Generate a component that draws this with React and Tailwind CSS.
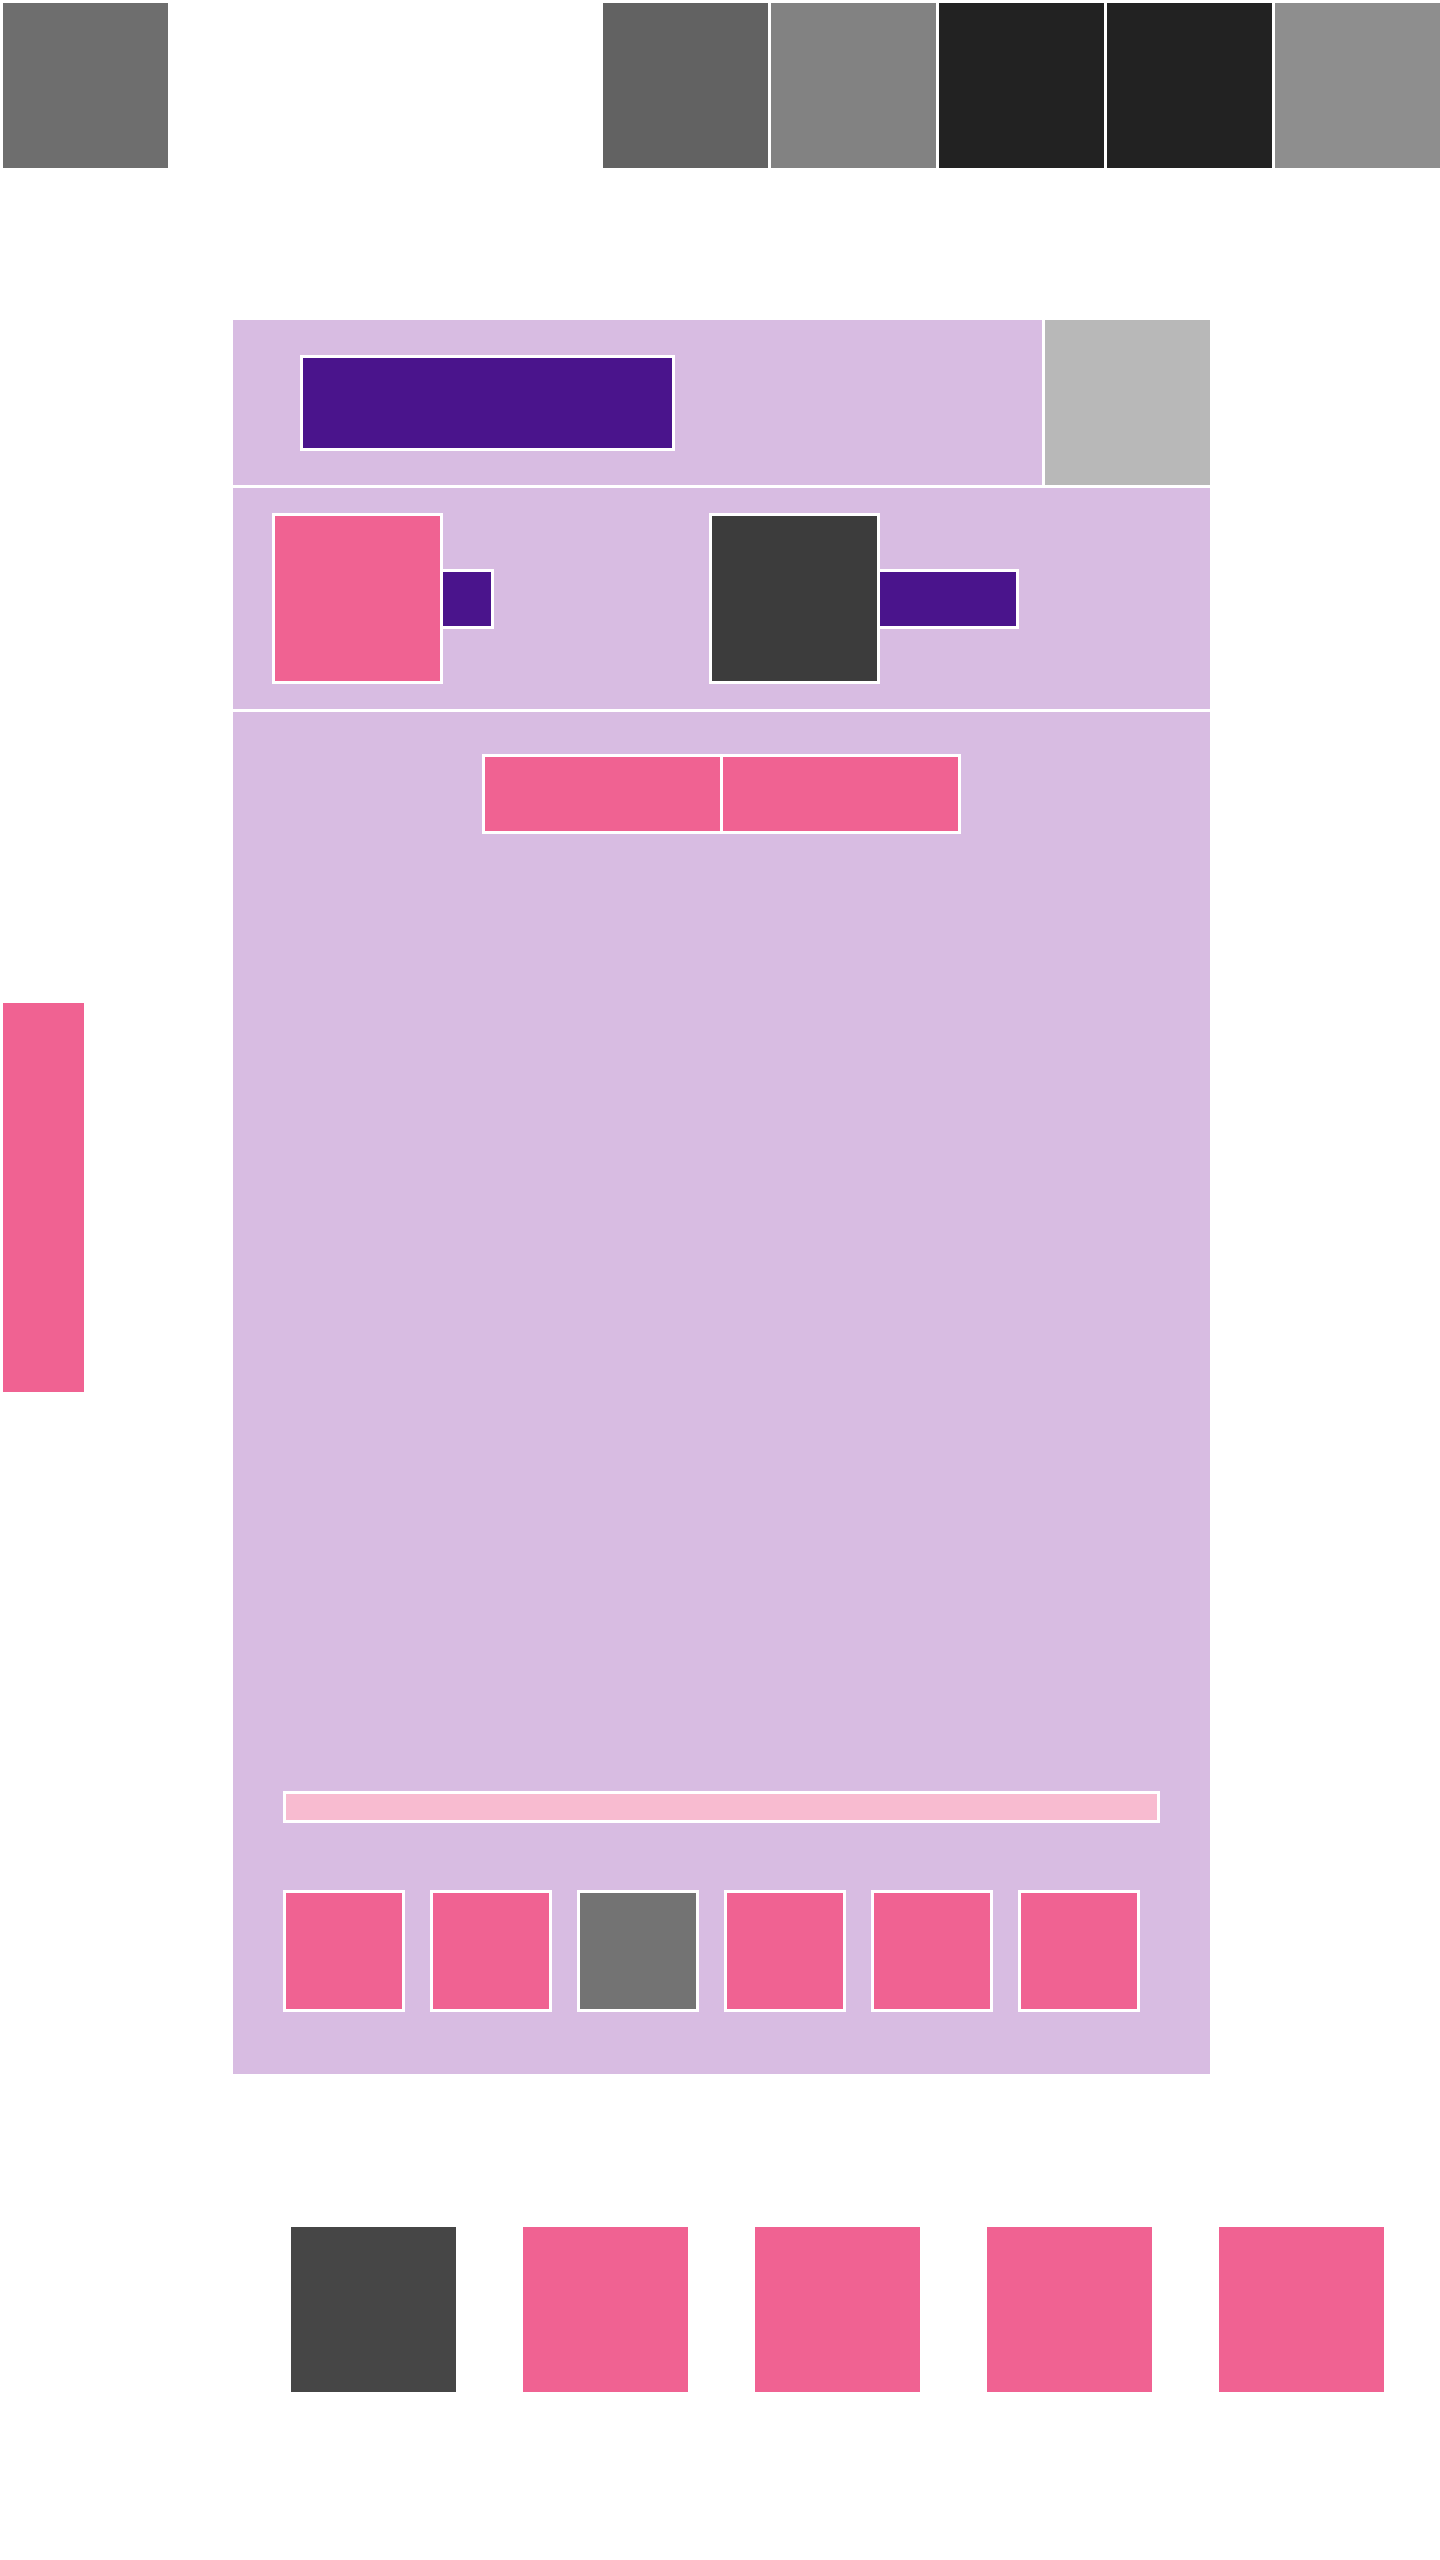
export default function App() {
  const pink = "bg-[#f06292]";
  return (
    <div className="w-[1440px] min-h-[2560px] bg-white">
      {/* top row */}
      <div className="flex justify-between pt-[3px]">
        <div className="ml-[3px] w-[165px] h-[165px] bg-[#6e6e6e]" />
        <div className="flex gap-[3px]">
          <div className="w-[165px] h-[165px] bg-[#626262]" />
          <div className="w-[165px] h-[165px] bg-[#828282]" />
          <div className="w-[165px] h-[165px] bg-[#222222]" />
          <div className="w-[165px] h-[165px] bg-[#222222]" />
          <div className="w-[165px] h-[165px] bg-[#8e8e8e]" />
        </div>
      </div>

      {/* middle */}
      <div className="flex mt-[152px]">
        <div className="w-[233px] shrink-0">
          <div className="ml-[3px] mt-[683px] w-[81px] h-[389px] bg-[#f06292]" />
        </div>
        <div className="w-[977px] flex flex-col gap-[3px]">
          {/* header */}
          <div className="flex gap-[3px] h-[165px]">
            <div className="flex-1 bg-[#d8bce2] flex items-center pl-[67px]">
              <div className="w-[375px] h-[96px] border-[3px] border-white bg-[#4a148c]" />
            </div>
            <div className="w-[165px] h-[165px] bg-[#b8b8b8]" />
          </div>
          {/* section 2 */}
          <div className="bg-[#d8bce2] h-[221px] flex items-center pl-[39px]">
            <div className="flex items-center">
              <div className={`w-[171px] h-[171px] border-[3px] border-white ${pink}`} />
              <div className="w-[51px] h-[60px] border-y-[3px] border-r-[3px] border-white bg-[#4a148c]" />
            </div>
            <div className="flex items-center ml-[215px]">
              <div className="w-[171px] h-[171px] border-[3px] border-white bg-[#3c3c3c]" />
              <div className="w-[139px] h-[60px] border-y-[3px] border-r-[3px] border-white bg-[#4a148c]" />
            </div>
          </div>
          {/* section 3 */}
          <div className="bg-[#d8bce2] h-[1362px] flex flex-col pt-[42px] px-[50px]">
            <div className="self-center flex gap-[3px] bg-white border-[3px] border-white">
              <div className={`w-[235px] h-[74px] ${pink}`} />
              <div className={`w-[235px] h-[74px] ${pink}`} />
            </div>
            <div className="mt-[957px] h-[32px] border-[3px] border-white bg-[#f8bbd0]" />
            <div className="mt-[67px] flex gap-[25px]">
              <div className={`w-[122px] h-[122px] border-[3px] border-white ${pink}`} />
              <div className={`w-[122px] h-[122px] border-[3px] border-white ${pink}`} />
              <div className="w-[122px] h-[122px] border-[3px] border-white bg-[#737373]" />
              <div className={`w-[122px] h-[122px] border-[3px] border-white ${pink}`} />
              <div className={`w-[122px] h-[122px] border-[3px] border-white ${pink}`} />
              <div className={`w-[122px] h-[122px] border-[3px] border-white ${pink}`} />
            </div>
          </div>
        </div>
      </div>

      {/* bottom row */}
      <div className="flex gap-[67px] pl-[291px] mt-[153px]">
        <div className="w-[165px] h-[165px] bg-[#464646]" />
        <div className={`w-[165px] h-[165px] ${pink}`} />
        <div className={`w-[165px] h-[165px] ${pink}`} />
        <div className={`w-[165px] h-[165px] ${pink}`} />
        <div className={`w-[165px] h-[165px] ${pink}`} />
      </div>
    </div>
  );
}
